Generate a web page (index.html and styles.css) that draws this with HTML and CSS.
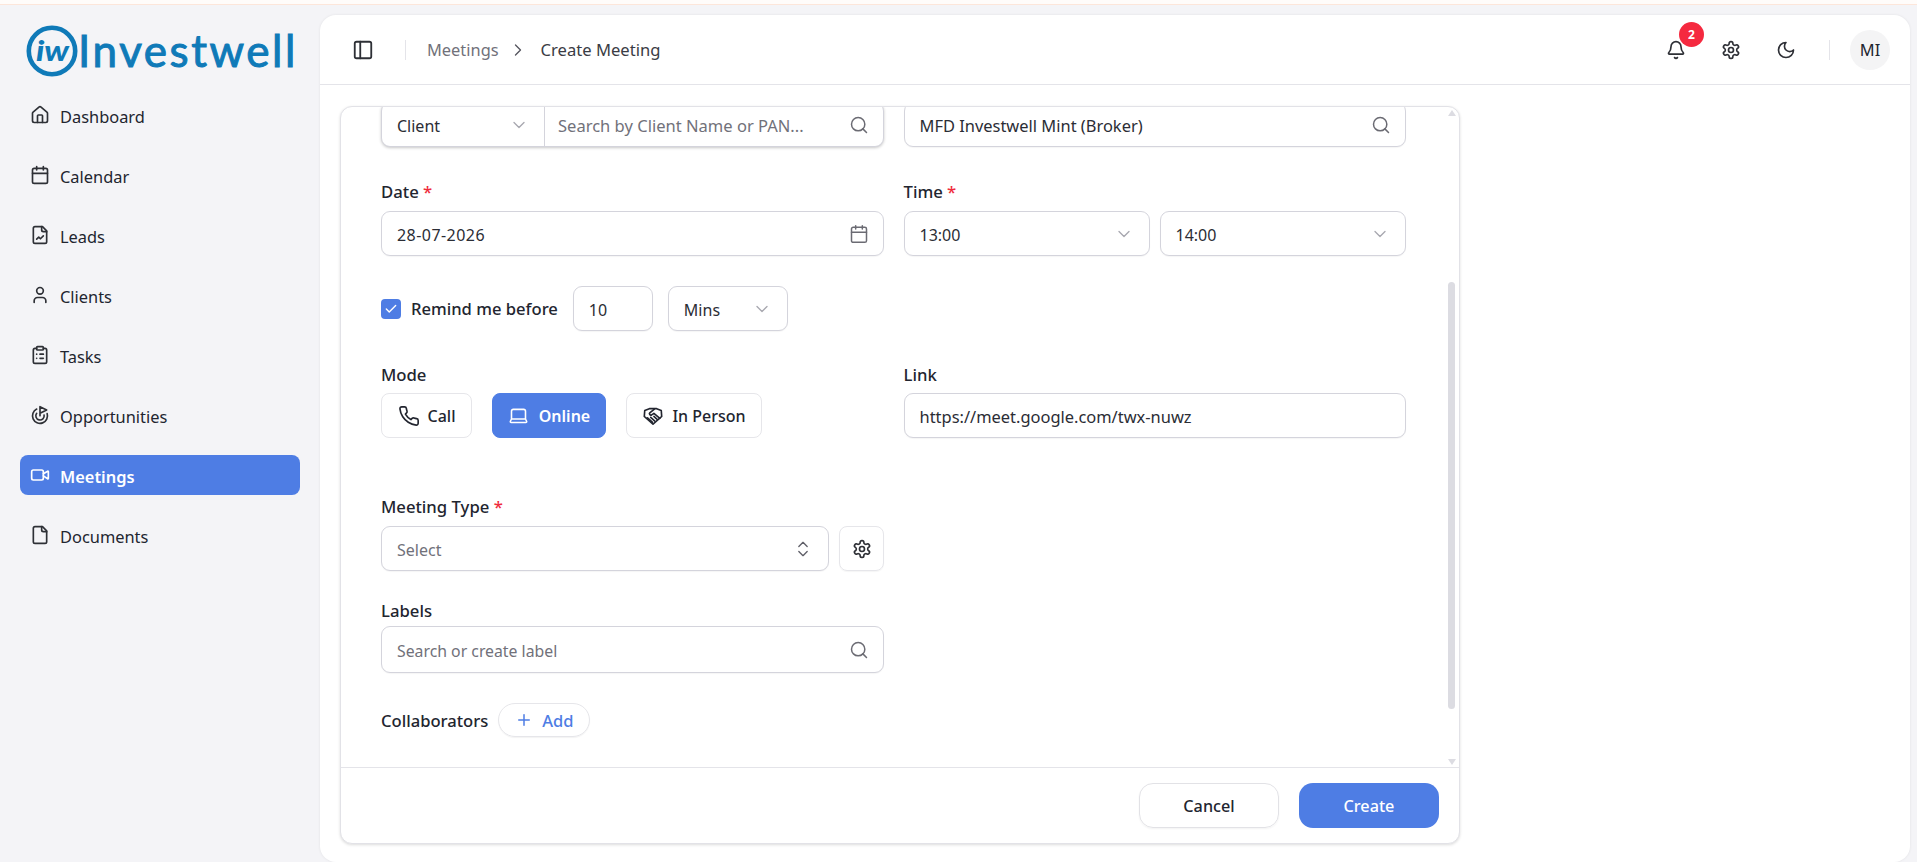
FILE: index.html
```html
<!DOCTYPE html>
<html lang="en">
<head>
<meta charset="utf-8">
<title>Create Meeting</title>
<link rel="stylesheet" href="styles.css">
</head>
<body>
<svg class="defs" width="0" height="0" aria-hidden="true">
  <symbol id="i-search" viewBox="0 0 24 24"><path d="m21 21-4.34-4.34"/><circle cx="11" cy="11" r="8"/></symbol>
  <symbol id="i-down" viewBox="0 0 24 24"><path d="m6 9 6 6 6-6"/></symbol>
  <symbol id="i-gear" viewBox="0 0 24 24"><path d="M12.22 2h-.44a2 2 0 0 0-2 2v.18a2 2 0 0 1-1 1.73l-.43.25a2 2 0 0 1-2 0l-.15-.08a2 2 0 0 0-2.73.73l-.22.38a2 2 0 0 0 .73 2.73l.15.1a2 2 0 0 1 1 1.72v.51a2 2 0 0 1-1 1.74l-.15.09a2 2 0 0 0-.73 2.73l.22.38a2 2 0 0 0 2.73.73l.15-.08a2 2 0 0 1 2 0l.43.25a2 2 0 0 1 1 1.73V20a2 2 0 0 0 2 2h.44a2 2 0 0 0 2-2v-.18a2 2 0 0 1 1-1.73l.43-.25a2 2 0 0 1 2 0l.15.08a2 2 0 0 0 2.73-.73l.22-.39a2 2 0 0 0-.73-2.73l-.15-.08a2 2 0 0 1-1-1.74v-.5a2 2 0 0 1 1-1.74l.15-.09a2 2 0 0 0 .73-2.73l-.22-.38a2 2 0 0 0-2.73-.73l-.15.08a2 2 0 0 1-2 0l-.43-.25a2 2 0 0 1-1-1.73V4a2 2 0 0 0-2-2z"/><circle cx="12" cy="12" r="3"/></symbol>
</svg>
<div class="topstrip"></div>
<div class="app">
  <aside class="sidebar">
    <div class="logo">
      <svg class="logo-mark" viewBox="0 0 52 52"><circle cx="26" cy="26" r="23.2" fill="none" stroke="#0f7ab8" stroke-width="4.6"/><text x="10" y="36" class="logo-iw" textLength="33" lengthAdjust="spacingAndGlyphs">iw</text></svg>
      <span class="logo-text">Investwell</span>
    </div>
    <nav class="nav">
      <a class="nav-item"><svg class="ic" viewBox="0 0 24 24"><path d="M15 21v-8a1 1 0 0 0-1-1h-4a1 1 0 0 0-1 1v8"/><path d="M3 10a2 2 0 0 1 .709-1.528l7-5.999a2 2 0 0 1 2.582 0l7 5.999A2 2 0 0 1 21 10v9a2 2 0 0 1-2 2H5a2 2 0 0 1-2-2z"/></svg>Dashboard</a>
      <a class="nav-item"><svg class="ic" viewBox="0 0 24 24"><path d="M8 2v4"/><path d="M16 2v4"/><rect width="18" height="18" x="3" y="4" rx="2"/><path d="M3 10h18"/></svg>Calendar</a>
      <a class="nav-item"><svg class="ic" viewBox="0 0 24 24"><path d="M15 2H6a2 2 0 0 0-2 2v16a2 2 0 0 0 2 2h12a2 2 0 0 0 2-2V7Z"/><path d="M14 2v4a2 2 0 0 0 2 2h4"/><path d="m16 13-3.5 3.5-2-2L8 17"/></svg>Leads</a>
      <a class="nav-item"><svg class="ic" viewBox="0 0 24 24"><path d="M19 21v-2a4 4 0 0 0-4-4H9a4 4 0 0 0-4 4v2"/><circle cx="12" cy="7" r="4"/></svg>Clients</a>
      <a class="nav-item"><svg class="ic" viewBox="0 0 24 24"><rect width="8" height="4" x="8" y="2" rx="1" ry="1"/><path d="M16 4h2a2 2 0 0 1 2 2v14a2 2 0 0 1-2 2H6a2 2 0 0 1-2-2V6a2 2 0 0 1 2-2h2"/><path d="M12 11h4"/><path d="M12 16h4"/><path d="M8 11h.01"/><path d="M8 16h.01"/></svg>Tasks</a>
      <a class="nav-item"><svg class="ic" viewBox="0 0 24 24"><path d="M12 13V2l8 4-8 4"/><path d="M20.561 10.222a9 9 0 1 1-12.55-5.29"/><path d="M8.002 9.997a5 5 0 1 0 8.9 2.02"/></svg>Opportunities</a>
      <a class="nav-item is-active"><svg class="ic" viewBox="0 0 24 24"><path d="m16 13 5.223 3.482a.5.5 0 0 0 .777-.416V7.87a.5.5 0 0 0-.752-.432L16 10.5"/><rect x="2" y="6" width="14" height="12" rx="2"/></svg>Meetings</a>
      <a class="nav-item"><svg class="ic" viewBox="0 0 24 24"><path d="M15 2H6a2 2 0 0 0-2 2v16a2 2 0 0 0 2 2h12a2 2 0 0 0 2-2V7Z"/><path d="M14 2v4a2 2 0 0 0 2 2h4"/></svg>Documents</a>
    </nav>
  </aside>

  <main class="main">
    <header class="topbar">
      <svg class="ic panel-ic" viewBox="0 0 24 24"><rect width="18" height="18" x="3" y="3" rx="2"/><path d="M9 3v18"/></svg>
      <span class="vline vline-left"></span>
      <span class="crumb-muted">Meetings</span>
      <svg class="crumb-sep" viewBox="0 0 24 24"><path d="m9 18 6-6-6-6"/></svg>
      <span class="crumb">Create Meeting</span>
      <div class="topbar-right">
        <span class="bell">
          <svg class="ic" viewBox="0 0 24 24"><path d="M10.268 21a2 2 0 0 0 3.464 0"/><path d="M3.262 15.326A1 1 0 0 0 4 17h16a1 1 0 0 0 .74-1.673C19.41 13.956 18 12.499 18 8A6 6 0 0 0 6 8c0 4.499-1.411 5.956-2.738 7.326"/></svg>
          <span class="badge">2</span>
        </span>
        <svg class="ic" viewBox="0 0 24 24"><use href="#i-gear"/></svg>
        <svg class="ic" viewBox="0 0 24 24"><path d="M12 3a6 6 0 0 0 9 9 9 9 0 1 1-9-9Z"/></svg>
        <span class="vline"></span>
        <span class="avatar">MI</span>
      </div>
    </header>

    <div class="content">
      <section class="card">
        <div class="card-body">
          <form class="form">
            <div class="cols">
              <div class="field group-shadow">
                <span class="client-type"><span class="val">Client</span><svg class="chev"><use href="#i-down"/></svg></span>
                <span class="client-search"><span class="ph ph-wide">Search by Client Name or PAN...</span><svg class="ic-m"><use href="#i-search"/></svg></span>
              </div>
              <div class="field"><span class="val val-wide">MFD Investwell Mint (Broker)</span><svg class="ic-m"><use href="#i-search"/></svg></div>
            </div>

            <div class="cols row-date">
              <div>
                <label class="lbl">Date <em>*</em></label>
                <div class="field"><span class="val val-date">28-07-2026</span><svg class="ic-m" viewBox="0 0 24 24"><path d="M8 2v4"/><path d="M16 2v4"/><rect width="18" height="18" x="3" y="4" rx="2"/><path d="M3 10h18"/></svg></div>
              </div>
              <div>
                <label class="lbl">Time <em>*</em></label>
                <div class="time-pair">
                  <div class="field"><span class="val">13:00</span><svg class="chev"><use href="#i-down"/></svg></div>
                  <div class="field"><span class="val">14:00</span><svg class="chev"><use href="#i-down"/></svg></div>
                </div>
              </div>
            </div>

            <div class="remind">
              <span class="check"><svg viewBox="0 0 24 24"><path d="M20 6 9 17l-5-5"/></svg></span>
              <span class="remind-label">Remind me before</span>
              <div class="field field-num"><span class="val">10</span></div>
              <div class="field field-unit"><span class="val">Mins</span><svg class="chev"><use href="#i-down"/></svg></div>
            </div>

            <div class="cols row-mode">
              <div>
                <label class="lbl">Mode</label>
                <div class="modes">
                  <button type="button" class="mode mode-call"><svg class="ic" viewBox="0 0 24 24"><path d="M22 16.92v3a2 2 0 0 1-2.18 2 19.79 19.79 0 0 1-8.63-3.07 19.5 19.5 0 0 1-6-6 19.79 19.79 0 0 1-3.07-8.67A2 2 0 0 1 4.11 2h3a2 2 0 0 1 2 1.72 12.84 12.84 0 0 0 .7 2.81 2 2 0 0 1-.45 2.11L8.09 9.91a16 16 0 0 0 6 6l1.27-1.27a2 2 0 0 1 2.11-.45 12.84 12.84 0 0 0 2.81.7A2 2 0 0 1 22 16.92z"/></svg>Call</button>
                  <button type="button" class="mode mode-online"><svg class="ic" viewBox="0 0 24 24"><path d="M20 16V7a2 2 0 0 0-2-2H6a2 2 0 0 0-2 2v9m16 0H4m16 0 1.28 2.55a1 1 0 0 1-.9 1.45H3.62a1 1 0 0 1-.9-1.45L4 16"/></svg>Online</button>
                  <button type="button" class="mode mode-person"><svg class="ic" viewBox="0 0 24 24"><path d="M3 6 8 4h8l5 2 .5 6.500L12 21l-9.500-8.500z"/><path d="M13.500 4.500 8.500 8.500c-1.100 1.100.3 3.100 2 2.300L13 9.200l6.500 5.300"/><path d="m6 14 5.500 5"/><path d="m9.500 13.500 4.500 4"/><path d="m13 12.500 3.800 3.500"/></svg>In Person</button>
                </div>
              </div>
              <div>
                <label class="lbl">Link</label>
                <div class="field"><span class="val val-wide">https://meet.google.com/twx-nuwz</span></div>
              </div>
            </div>

            <div class="half row-type">
              <label class="lbl">Meeting Type <em>*</em></label>
              <div class="type-row">
                <div class="field"><span class="ph">Select</span><svg class="updown" viewBox="0 0 24 24"><path d="m7 15 5 5 5-5"/><path d="m7 9 5-5 5 5"/></svg></div>
                <button type="button" class="gear-btn"><svg class="ic-g"><use href="#i-gear"/></svg></button>
              </div>
            </div>

            <div class="half row-labels">
              <label class="lbl lbl-flush">Labels</label>
              <div class="field field-tall"><span class="ph ph-narrow">Search or create label</span><svg class="ic-m"><use href="#i-search"/></svg></div>
            </div>

            <div class="collab">
              <span class="collab-label">Collaborators</span>
              <button type="button" class="add-btn"><svg viewBox="0 0 24 24"><path d="M5 12h14"/><path d="M12 5v14"/></svg>Add</button>
            </div>
          </form>
          <div class="scrollbar">
            <span class="arrow-up"></span>
            <span class="thumb"></span>
            <span class="arrow-down"></span>
          </div>
        </div>
        <footer class="card-foot">
          <button type="button" class="btn btn-ghost">Cancel</button>
          <button type="button" class="btn btn-primary">Create</button>
        </footer>
      </section>
    </div>
  </main>
</div>
</body>
</html>
```
FILE: styles.css
```css
* { box-sizing: border-box; }
html, body { margin: 0; height: 100%; }
body {
  width: 1917px; height: 862px; overflow: hidden;
  background: #f4f4f7; color: #22252f;
  font-family: "Noto Sans", "Open Sans", sans-serif; font-size: 16px;
  display: flex; flex-direction: column;
}
.defs { position: absolute; }
svg { fill: none; stroke: currentColor; stroke-width: 2; stroke-linecap: round; stroke-linejoin: round; flex: none; }
button { font: inherit; color: inherit; background: none; border: 0; padding: 0; }

.topstrip { height: 5px; background: #fffcfa; border-bottom: 1px solid #fde6da; flex: none; }
.app { flex: 1; display: flex; min-height: 0; }

/* sidebar */
.sidebar { width: 320px; flex: none; padding: 20px 20px 0; }
.logo { display: flex; align-items: center; gap: 0; height: 51px; margin-left: 6px; }
.logo-mark { width: 52px; height: 52px; stroke: none; }
.logo-iw { font-family: "Lato", sans-serif; font-style: italic; font-weight: 900; font-size: 29px; fill: #0f7ab8; }
.logo-text { font-family: "Lato", sans-serif; font-size: 44px; line-height: 51px; color: #0f7ab8; letter-spacing: 2.55px; font-weight: 400; -webkit-text-stroke: 1px #0f7ab8; white-space: nowrap; }
.nav { display: flex; flex-direction: column; gap: 20px; margin-top: 19px; }
.nav-item { display: flex; align-items: center; gap: 10px; height: 40px; padding: 2px 0 0 10px; border-radius: 8px; color: #22252f; font-size: 16.4px; }
.nav-item .ic { color: #2e3036; margin-top: -3px; }
.nav-item.is-active { background: #4e7de4; color: #fff; font-weight: 600; }
.nav-item.is-active .ic { color: #fff; }
.ic { width: 20px; height: 20px; }

/* main */
.main { flex: 1; margin: 10px 7px 0 0; background: #fff; border-radius: 16px; box-shadow: 0 0 3px rgba(0,0,0,.08); display: flex; flex-direction: column; min-width: 0; }
.topbar { height: 70px; flex: none; display: flex; align-items: center; padding: 0 20px 0 32px; border-bottom: 1px solid #e4e4e9; font-size: 16.4px; }
.panel-ic { width: 22px; height: 22px; color: #2e3036; }
.vline { width: 1px; height: 20px; background: #e4e4e9; }
.vline-left { margin: 0 21px 0 31px; }
.crumb-muted { color: #71717a; }
.crumb-sep { width: 20px; height: 20px; color: #55555e; stroke-width: 1.6; margin: 0 13px 0 9px; }
.crumb { color: #3a3c44; font-size: 16.6px; }
.topbar-right { margin-left: auto; display: flex; align-items: center; }
.topbar-right > .ic { margin-left: 35px; color: #2e3036; }
.bell { position: relative; display: flex; color: #2e3036; }
.badge { position: absolute; left: 13px; top: -18px; width: 25px; height: 25px; border-radius: 50%; background: #f5293f; color: #fff; font-size: 12px; font-weight: 700; display: flex; align-items: center; justify-content: center; }
.topbar-right > .vline { margin: 0 20px 0 33px; }
.avatar { width: 40px; height: 40px; border-radius: 50%; background: #f4f4f5; display: flex; align-items: center; justify-content: center; color: #22252f; }

.content { flex: 1; padding: 21px 0 0 20px; min-height: 0; }
.card { width: 1120px; height: 738px; background: #fff; border: 1px solid #e2e2e7; border-radius: 12px; box-shadow: 0 1px 3px rgba(0,0,0,.14); display: flex; flex-direction: column; overflow: hidden; }
.card-body { flex: 1; display: flex; min-height: 0; overflow: hidden; }
.form { flex: 1; margin-top: -5px; padding: 0 38px 0 40px; }
.cols { display: grid; grid-template-columns: 1fr 1fr; gap: 20px; }
.half { width: 503px; }

.lbl { display: block; height: 24px; line-height: 24px; margin-bottom: 7px; font-size: 16.7px; font-weight: 500; color: #22252f; }
.lbl em { font-style: normal; color: #ef2b3c; }
.lbl-flush { margin-bottom: 3px; }

.field { display: flex; align-items: center; justify-content: space-between; height: 45px; padding: 0 15px; border: 1px solid #d4d4dc; border-radius: 9px; background: #fff; box-shadow: 0 1px 1px rgba(0,0,0,.04); min-width: 0; }
.field-tall { height: 47px; }
.val { color: #2b2d35; white-space: nowrap; padding-top: 2px; }
.val-wide { font-size: 16.45px; }
.val-date { letter-spacing: .45px; }
.ph { color: #71717a; white-space: nowrap; padding-top: 2px; }
.ph-wide { font-size: 16.55px; }
.ph-narrow { font-size: 15.8px; }
.chev { width: 20px; height: 20px; color: #a8a8b0; stroke-width: 1.6; }
.ic-m { width: 20px; height: 20px; color: #6b6b73; stroke-width: 1.8; margin-right: -1px; }

.group-shadow { padding: 0; box-shadow: 0 1px 3px rgba(0,0,0,.22); }
.client-type { width: 163px; flex: none; height: 100%; display: flex; align-items: center; justify-content: space-between; padding: 0 15px; border-right: 1px solid #d4d4dc; }
.client-search { flex: 1; display: flex; align-items: center; justify-content: space-between; padding: 0 15px 0 13px; }

.row-date { margin-top: 33px; }
.time-pair { display: grid; grid-template-columns: 246px 1fr; gap: 10px; }

.remind { display: flex; align-items: center; margin-top: 30px; height: 45px; }
.check { width: 20px; height: 20px; border-radius: 4px; background: #4e7de4; color: #fff; display: flex; align-items: center; justify-content: center; }
.check svg { width: 14px; height: 14px; stroke-width: 2.4; }
.remind-label { margin-left: 10px; font-weight: 500; font-size: 16.6px; }
.field-num { width: 80px; margin-left: 15px; }
.field-unit { width: 120px; margin-left: 15px; }

.row-mode { margin-top: 32px; }
.row-mode .lbl { margin-bottom: 6px; }
.modes { display: flex; gap: 20px; }
.mode { height: 45px; display: flex; align-items: center; justify-content: center; gap: 9px; border: 1px solid #e6e6ea; border-radius: 8px; font-weight: 500; color: #22252f; background: #fff; }
.mode .ic { stroke-width: 1.8; }
.mode-call { width: 91px; gap: 8px; }
.mode-call .ic { width: 22px; height: 22px; }
.mode-online { width: 114px; gap: 10px; background: #4e7de4; border-color: #4e7de4; color: #fff; font-weight: 600; }
.mode-online .ic { width: 21px; height: 21px; }
.mode-person { width: 136px; gap: 8px; }
.mode-person .ic { width: 22px; height: 22px; }

.row-type { margin-top: 57px; }
.type-row { display: flex; gap: 10px; }
.type-row .field { flex: 1; }
.updown { width: 20px; height: 20px; color: #5f5f68; stroke-width: 1.6; }
.gear-btn { width: 45px; height: 45px; flex: none; border: 1px solid #e6e6ea; border-radius: 8px; display: flex; align-items: center; justify-content: center; box-shadow: 0 1px 1px rgba(0,0,0,.04); }
.ic-g { width: 20px; height: 20px; color: #2e3036; }

.row-labels { margin-top: 28px; }

.collab { display: flex; align-items: center; margin-top: 30px; gap: 10px; }
.collab-label { font-weight: 500; font-size: 16.6px; }
.add-btn { width: 92px; height: 34px; border: 1px solid #e6e6ea; border-radius: 17px; display: flex; align-items: center; justify-content: center; gap: 9px; color: #4e7de4; font-weight: 500; font-size: 16.5px; box-shadow: 0 1px 1px rgba(0,0,0,.05); }
.add-btn svg { width: 18px; height: 18px; }

.scrollbar { width: 15px; flex: none; display: flex; flex-direction: column; align-items: center; padding: 3px 0 2px; }
.arrow-up { width: 0; height: 0; border: 4px solid transparent; border-top: 0; border-bottom: 6px solid #dcdce2; }
.thumb { width: 7px; height: 427px; margin-top: 166px; border-radius: 4px; background: #dcdce2; }
.arrow-down { width: 0; height: 0; margin-top: auto; border: 4px solid transparent; border-bottom: 0; border-top: 6px solid #dcdce2; }

.card-foot { height: 76px; flex: none; display: flex; justify-content: flex-end; gap: 20px; padding: 15px 20px 0 0; border-top: 1px solid #e4e4e9; }
.btn { width: 140px; height: 45px; border-radius: 14px; font-weight: 500; font-size: 16.2px; }
.btn-ghost { border: 1px solid #e2e2e6; box-shadow: 0 1px 2px rgba(0,0,0,.05); color: #22252f; }
.btn-primary { background: #4e7de4; color: #fff; }
```
